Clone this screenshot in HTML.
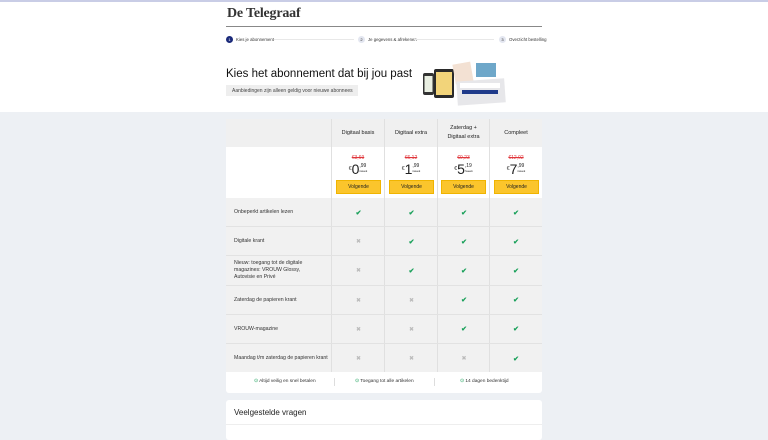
<!DOCTYPE html>
<html><head><meta charset="utf-8"><style>
*{margin:0;padding:0;box-sizing:border-box}
body{width:768px;height:432px;overflow:hidden;background:#edf0f4;font-family:"Liberation Sans",sans-serif;color:#222;position:relative}
.top{position:absolute;left:0;top:0;width:768px;height:112px;background:#fff;border-top:2px solid #c9cde6}
.logo{position:absolute;left:227px;top:4px;font-family:"Liberation Serif",serif;font-weight:bold;font-size:14px;color:#333;letter-spacing:-.2px}
.hr{position:absolute;left:226px;top:24px;width:316px;height:1px;background:#888}
.step{position:absolute;top:34px;font-size:4.3px;color:#333;display:flex;align-items:center}
.dot{width:7px;height:7px;border-radius:50%;background:#e3e6f0;color:#333;font-size:4px;display:inline-flex;align-items:center;justify-content:center;margin-right:3px}
.line{position:absolute;top:37px;height:1px;background:#e8e8e8}
h1{position:absolute;left:226px;top:66px;font-size:11.5px;font-weight:normal;color:#111}
.pill{position:absolute;left:226px;top:83px;width:132px;height:11px;background:#eee;font-size:5px;color:#444;padding:3px 0 0 6px}
.tb{position:absolute;left:226px;width:316px}
.c{position:absolute;display:flex;align-items:center;justify-content:center;text-align:center}
.feat{font-size:5.2px;color:#333;line-height:7px;text-align:left;justify-content:flex-start;padding-left:8px;padding-right:28px}
.ck{color:#1aa05a;font-size:7px;font-weight:bold}
.x{color:#bbb;font-size:6px}
.btn{position:absolute;width:45px;height:14px;background:#fbc52c;border:1px solid #f0b400;font-size:5px;display:flex;align-items:center;justify-content:center}
</style></head><body>
<div class="top">
<div class="logo">De Telegraaf</div>
<div class="hr"></div>
<div class="step" style="left:226px"><span class="dot" style="background:#1b2a7a;color:#fff">1</span>Kies je abonnement</div>
<div class="line" style="left:274px;width:80px"></div>
<div class="step" style="left:358px"><span class="dot">2</span>Je gegevens &amp; afrekenen</div>
<div class="line" style="left:414px;width:80px"></div>
<div class="step" style="left:499px"><span class="dot">3</span>Overzicht bestelling</div>
<h1>Kies het abonnement dat bij jou past</h1>
<div class="pill">Aanbiedingen zijn alleen geldig voor nieuwe abonnees</div>
<svg style="position:absolute;left:420px;top:55px" width="90" height="50">
<rect x="3" y="16" width="11" height="22" rx="2" fill="#333"/><rect x="4.5" y="19" width="8" height="16" fill="#e9efe2"/>
<rect x="14" y="12" width="20" height="29" rx="2" fill="#2a2a2a"/><rect x="16" y="15" width="16" height="23" fill="#f2d47a"/>
<rect x="34" y="6" width="18" height="20" fill="#f3e1d3" transform="rotate(-10 43 16)"/>
<rect x="56" y="6" width="20" height="14" fill="#6ea7c9"/>
<rect x="37" y="23" width="48" height="24" fill="#e7e7ea" transform="rotate(-4 60 35)"/>
<rect x="40" y="26" width="40" height="5" fill="#fff"/><rect x="42" y="33" width="36" height="4" fill="#1f3a8a"/>
</svg>
</div>
<div class="tb" style="top:119px;height:28px;background:#f0f0f0"></div>
<div class="tb" style="top:147px;height:51px;background:#fff"></div>
<div class="tb" style="top:198px;height:174px;background:#f1f1f1"></div>
<div style="position:absolute;left:331px;top:119px;width:1px;height:253px;background:#e0e0e0"></div>
<div style="position:absolute;left:384px;top:119px;width:1px;height:253px;background:#e0e0e0"></div>
<div style="position:absolute;left:437px;top:119px;width:1px;height:253px;background:#e0e0e0"></div>
<div style="position:absolute;left:489px;top:119px;width:1px;height:253px;background:#e0e0e0"></div>
<div class="tb" style="top:226px;height:1px;background:#e2e2e2"></div>
<div class="tb" style="top:255px;height:1px;background:#e2e2e2"></div>
<div class="tb" style="top:285px;height:1px;background:#e2e2e2"></div>
<div class="tb" style="top:314px;height:1px;background:#e2e2e2"></div>
<div class="tb" style="top:343px;height:1px;background:#e2e2e2"></div>

<div class="c" style="left:332px;top:119px;width:52px;height:28px;font-size:5.5px">Digitaal basis</div>
<div class="c" style="left:385px;top:119px;width:52px;height:28px;font-size:5.5px">Digitaal extra</div>
<div class="c" style="left:438px;top:119px;width:51px;height:28px;font-size:5.5px;line-height:9px">Zaterdag +<br>Digitaal extra</div>
<div class="c" style="left:490px;top:119px;width:52px;height:28px;font-size:5.5px">Compleet</div>

<div class="c" style="left:332px;top:154px;width:52px;height:8px;font-size:5px;color:#e0353b;text-decoration:line-through">€3,69</div>
<div class="c" style="left:385px;top:154px;width:52px;height:8px;font-size:5px;color:#e0353b;text-decoration:line-through">€6,12</div>
<div class="c" style="left:438px;top:154px;width:51px;height:8px;font-size:5px;color:#e0353b;text-decoration:line-through">€9,23</div>
<div class="c" style="left:490px;top:154px;width:52px;height:8px;font-size:5px;color:#e0353b;text-decoration:line-through">€12,92</div>

<div class="c" style="left:332px;top:161px;width:52px;height:16px"><span style="font-size:5px">€</span><b style="font-size:14px;font-weight:normal">0</b><span style="font-size:5px;line-height:5px;text-align:left">,99<br><span style="font-size:3px">/week</span></span></div>
<div class="c" style="left:385px;top:161px;width:52px;height:16px"><span style="font-size:5px">€</span><b style="font-size:14px;font-weight:normal">1</b><span style="font-size:5px;line-height:5px;text-align:left">,99<br><span style="font-size:3px">/week</span></span></div>
<div class="c" style="left:438px;top:161px;width:51px;height:16px"><span style="font-size:5px">€</span><b style="font-size:14px;font-weight:normal">5</b><span style="font-size:5px;line-height:5px;text-align:left">,19<br><span style="font-size:3px">/week</span></span></div>
<div class="c" style="left:490px;top:161px;width:52px;height:16px"><span style="font-size:5px">€</span><b style="font-size:14px;font-weight:normal">7</b><span style="font-size:5px;line-height:5px;text-align:left">,99<br><span style="font-size:3px">/week</span></span></div>

<div class="btn" style="left:336px;top:180px">Volgende</div>
<div class="btn" style="left:389px;top:180px">Volgende</div>
<div class="btn" style="left:441px;top:180px">Volgende</div>
<div class="btn" style="left:494px;top:180px">Volgende</div>

<div class="c feat" style="left:226px;top:198px;width:105px;height:28px">Onbeperkt artikelen lezen</div>
<div class="c feat" style="left:226px;top:227px;width:105px;height:28px">Digitale krant</div>
<div class="c feat" style="left:226px;top:256px;width:105px;height:29px">Nieuw: toegang tot de digitale magazines: VROUW Glossy, Autovisie en Privé</div>
<div class="c feat" style="left:226px;top:286px;width:105px;height:28px">Zaterdag de papieren krant</div>
<div class="c feat" style="left:226px;top:315px;width:105px;height:28px">VROUW-magazine</div>
<div class="c feat" style="left:226px;top:344px;width:105px;height:28px;padding-right:0;white-space:nowrap">Maandag t/m zaterdag de papieren krant</div>

<div style="position:absolute;left:332px;top:198px;width:210px">
<div style="display:grid;grid-template-columns:53px 53px 52px 52px;grid-auto-rows:29.2px;text-align:center;align-items:center">
<span class="ck">✔</span><span class="ck">✔</span><span class="ck">✔</span><span class="ck">✔</span>
<span class="x">✖</span><span class="ck">✔</span><span class="ck">✔</span><span class="ck">✔</span>
<span class="x">✖</span><span class="ck">✔</span><span class="ck">✔</span><span class="ck">✔</span>
<span class="x">✖</span><span class="x">✖</span><span class="ck">✔</span><span class="ck">✔</span>
<span class="x">✖</span><span class="x">✖</span><span class="ck">✔</span><span class="ck">✔</span>
<span class="x">✖</span><span class="x">✖</span><span class="x">✖</span><span class="ck">✔</span>
</div></div>

<div class="tb" style="top:372px;height:21px;background:#fff;border-radius:0 0 3px 3px;font-size:4.8px;color:#333">
<span style="position:absolute;left:28px;top:7px"><span style="color:#1aa05a">⊙</span> Altijd veilig en snel betalen</span>
<span style="position:absolute;left:108px;top:6px;width:1px;height:8px;background:#ddd"></span>
<span style="position:absolute;left:129px;top:7px"><span style="color:#1aa05a">⊙</span> Toegang tot alle artikelen</span>
<span style="position:absolute;left:208px;top:6px;width:1px;height:8px;background:#ddd"></span>
<span style="position:absolute;left:234px;top:7px"><span style="color:#1aa05a">⊙</span> 14 dagen bedenktijd</span>
</div>
<div class="tb" style="top:400px;height:40px;background:#fff;border-radius:3px">
<div style="position:absolute;left:8px;top:8px;font-size:8px;color:#222">Veelgestelde vragen</div>
<div style="position:absolute;left:0;top:24px;width:316px;height:1px;background:#eee"></div>
</div>
</body></html>
